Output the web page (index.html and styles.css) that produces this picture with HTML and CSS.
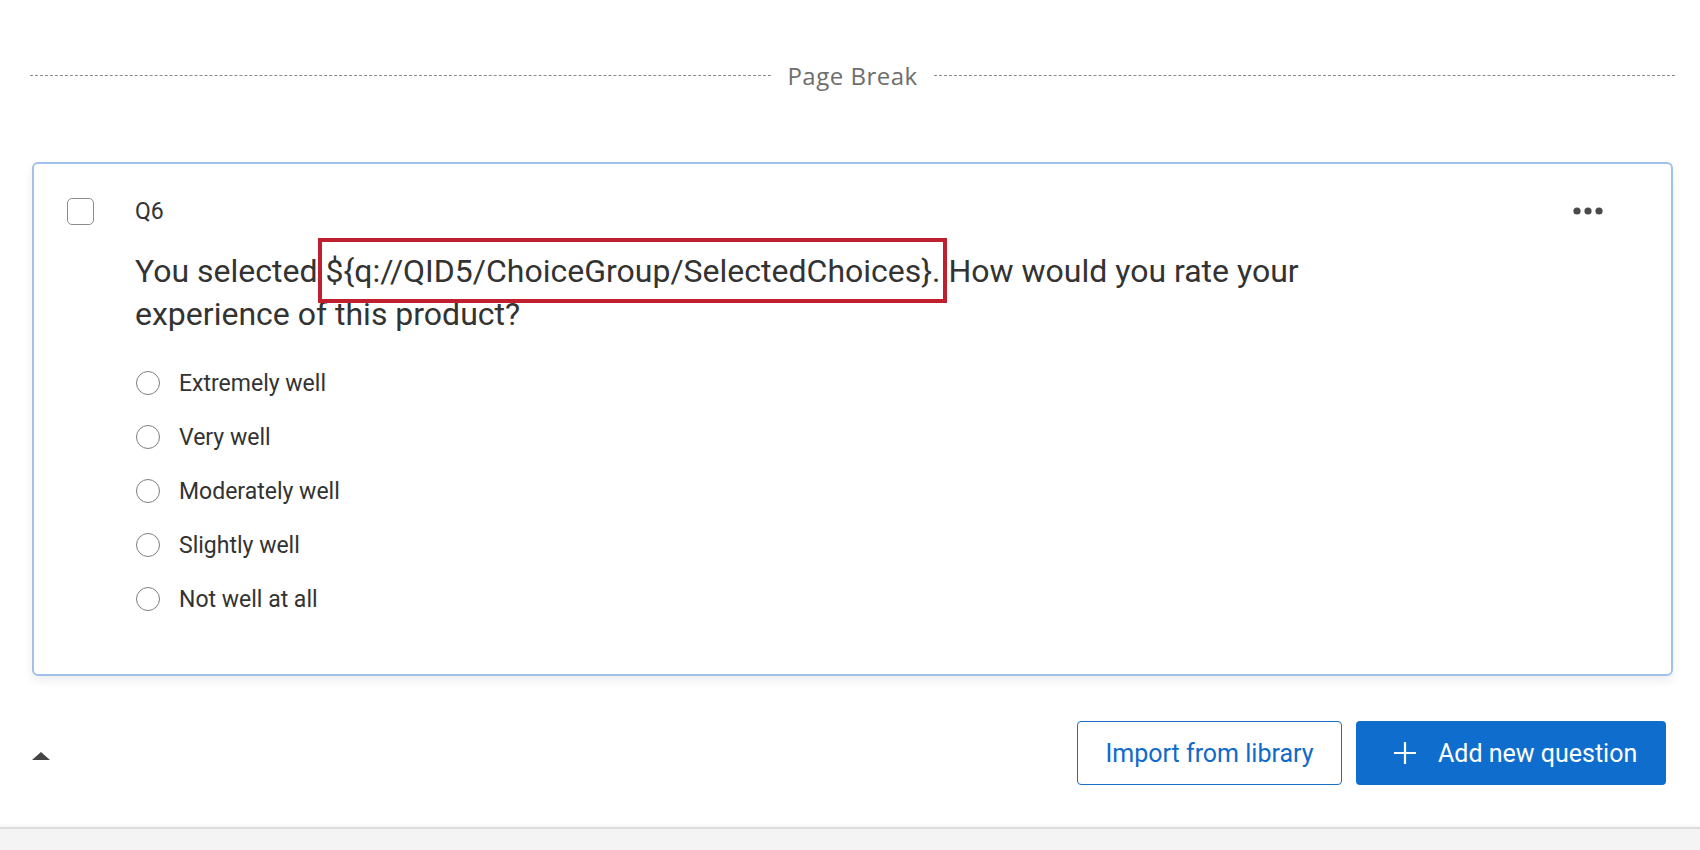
FILE: index.html
```html
<!DOCTYPE html>
<html lang="en">
<head>
    <meta charset="UTF-8">
    <meta name="viewport" content="width=device-width, initial-scale=1.0">
    <title>Survey Builder - Q6</title>
    <link rel="stylesheet" href="styles.css">
</head>
<body>
    <div class="editor">
        <div class="page-break">
            <span class="dash"></span>
            <span class="page-break-label">Page Break</span>
            <span class="dash"></span>
        </div>

        <div class="question-card">
            <div class="question-head">
                <span class="select-box"></span>
                <span class="question-id">Q6</span>
                <span class="more-menu">
                    <svg width="30" height="8" viewBox="0 0 30 8">
                        <circle cx="4" cy="4" r="3.6" fill="#4a4a4a"/>
                        <circle cx="15" cy="4" r="3.6" fill="#4a4a4a"/>
                        <circle cx="26" cy="4" r="3.6" fill="#4a4a4a"/>
                    </svg>
                </span>
            </div>
            <div class="question-body">
                <p class="question-text">You selected <span class="piped-text">${q://QID5/ChoiceGroup/SelectedChoices}.</span> How would you rate your experience of this product?</p>
                <ul class="choices">
                    <li><span class="radio"></span>Extremely well</li>
                    <li><span class="radio"></span>Very well</li>
                    <li><span class="radio"></span>Moderately well</li>
                    <li><span class="radio"></span>Slightly well</li>
                    <li><span class="radio"></span>Not well at all</li>
                </ul>
            </div>
        </div>

        <div class="block-footer">
            <span class="collapse-caret"></span>
            <div class="block-actions">
                <button class="btn btn-outline">Import from library</button>
                <button class="btn btn-primary">
                    <svg width="24" height="24" viewBox="0 0 24 24">
                        <path d="M12 1v22M1 12h22" stroke="#fff" stroke-width="2.2" fill="none"/>
                    </svg>
                    Add new question
                </button>
            </div>
        </div>
    </div>
    <div class="bottom-bar"></div>
</body>
</html>
```

FILE: styles.css
```css
* {
    margin: 0;
    padding: 0;
    box-sizing: border-box;
}

body {
    background-color: #fff;
    font-family: Roboto, "Liberation Sans", Arial, sans-serif;
    color: #333;
    height: 850px;
    overflow: hidden;
    display: flex;
    flex-direction: column;
}

.editor {
    flex: 1;
    padding: 63px 27px 0 32px;
}

.page-break {
    display: flex;
    align-items: center;
    gap: 16px;
    height: 24px;
    margin-right: -2px;
    margin-left: -2px;
}

.dash {
    flex: 1;
    border-top: 1px dashed #8a8a8a;
}

.page-break-label {
    font-family: "Open Sans", Roboto, sans-serif;
    font-size: 24px;
    color: #6e6e6e;
    letter-spacing: 0.5px;
}

.question-card {
    margin-top: 75px;
    height: 514px;
    border: 2px solid #9fc1ea;
    border-radius: 6px;
    box-shadow: 0 5px 10px rgba(0, 0, 0, 0.07);
    padding: 33px 68px 0 33px;
}

.question-head {
    display: flex;
    align-items: center;
    height: 28px;
}

.select-box {
    width: 27px;
    height: 27px;
    border: 1.5px solid #8c8c8c;
    border-radius: 5px;
}

.question-id {
    margin-left: 41px;
    font-size: 23px;
    color: #333;
}

.more-menu {
    margin-left: auto;
    display: flex;
}

.question-body {
    padding-left: 68px;
}

.question-text {
    margin-top: 25px;
    font-size: 32px;
    line-height: 43px;
    color: #333;
    max-width: 1220px;
}

/* highlight box around the piped text */
.piped-text {
    position: relative;
}

.piped-text::after {
    content: "";
    position: absolute;
    left: -7px;
    right: -6px;
    top: -14px;
    bottom: -13px;
    border: 4px solid #c01f2f;
}

.choices {
    list-style: none;
    margin-top: 20px;
}

.choices li {
    display: flex;
    align-items: center;
    height: 54px;
    font-size: 23px;
    color: #333;
}

.radio {
    width: 24px;
    height: 24px;
    border: 1.5px solid #7e7e7e;
    border-radius: 50%;
    margin-left: 1px;
    margin-right: 19px;
}

.block-footer {
    display: flex;
    align-items: center;
    justify-content: space-between;
    margin-top: 45px;
    margin-right: 7px;
}

.collapse-caret {
    width: 0;
    height: 0;
    margin-top: 5px;
    border-left: 9px solid transparent;
    border-right: 9px solid transparent;
    border-bottom: 8px solid #444;
}

.block-actions {
    display: flex;
    gap: 14px;
}

.btn {
    height: 64px;
    border-radius: 4px;
    font-family: Roboto, "Liberation Sans", sans-serif;
    font-size: 25px;
    display: flex;
    align-items: center;
    cursor: pointer;
}

.btn-outline {
    width: 265px;
    justify-content: center;
    background-color: #fff;
    border: 1.5px solid #1a6fc4;
    color: #0f6acb;
}

.btn-primary {
    width: 310px;
    padding-left: 37px;
    background-color: #0f6ecd;
    border: none;
    color: #fff;
    gap: 21px;
}

.bottom-bar {
    height: 23px;
    background-color: #f4f4f4;
    border-top: 2px solid #dcdcdc;
    box-shadow: 0 -2px 3px rgba(0, 0, 0, 0.04);
}
```
